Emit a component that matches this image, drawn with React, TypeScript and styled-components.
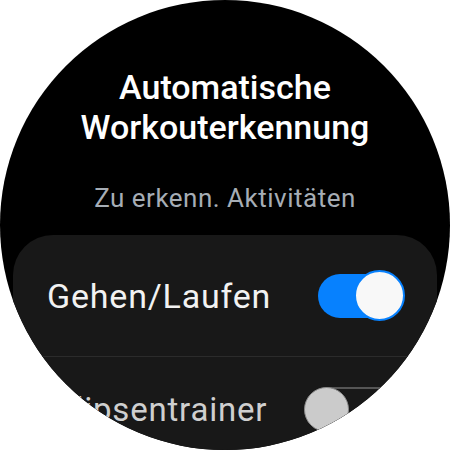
import styled, { createGlobalStyle } from "styled-components";

const GlobalStyle = createGlobalStyle`
  html, body {
    margin: 0;
    padding: 0;
    background: #ffffff;
  }
  body {
    font-family: Roboto, "Noto Sans", "Liberation Sans", sans-serif;
  }
`;

const Watch = styled.div`
  width: 450px;
  height: 450px;
  border-radius: 50%;
  overflow: hidden;
  background: #000;
  display: flex;
  flex-direction: column;
  align-items: stretch;
`;

const Header = styled.header`
  padding-top: 67px;
  text-align: center;
`;

const Title = styled.h1`
  margin: 0;
  font-size: 34px;
  line-height: 40px;
  font-weight: 500;
  color: #ffffff;
`;

const Subtitle = styled.div`
  margin-top: 36px;
  font-size: 26px;
  line-height: 30px;
  letter-spacing: 0.5px;
  color: #a6adb5;
`;

const Card = styled.section`
  margin: 22px 13px 0;
  background: #181818;
  border-radius: 40px 40px 0 0;
  flex: 1;
  display: flex;
  flex-direction: column;
`;

const Row = styled.div<{ $height: number }>`
  height: ${({ $height }) => $height}px;
  display: flex;
  align-items: center;
  justify-content: space-between;
  padding: 0 32px 0 34px;
  flex-shrink: 0;
`;

const Divider = styled.div`
  height: 1px;
  background: #2b2b2b;
  flex-shrink: 0;
`;

const Label = styled.span<{ $dim?: boolean }>`
  font-size: ${({ $dim }) => ($dim ? 33 : 34)}px;
  letter-spacing: 0.8px;
  color: ${({ $dim }) => ($dim ? "#cfcfcf" : "#f2f2f2")};
`;

const SwitchBox = styled.div<{ $on: boolean }>`
  position: relative;
  width: ${({ $on }) => ($on ? 87 : 101)}px;
  height: ${({ $on }) => ($on ? 51 : 45)}px;
  flex-shrink: 0;
`;

const Track = styled.div<{ $on: boolean }>`
  position: absolute;
  top: 50%;
  transform: translateY(-50%);
  left: ${({ $on }) => ($on ? 0 : 2)}px;
  right: ${({ $on }) => ($on ? 6 : 0)}px;
  height: 44px;
  box-sizing: border-box;
  border-radius: 22px;
  background: ${({ $on }) => ($on ? "#0781fe" : "transparent")};
  border: ${({ $on }) => ($on ? "none" : "2px solid #555")};
`;

const Thumb = styled.div<{ $on: boolean }>`
  position: absolute;
  top: 0;
  ${({ $on }) => ($on ? "right: 0;" : "left: 0;")}
  width: ${({ $on }) => ($on ? 51 : 45)}px;
  height: ${({ $on }) => ($on ? 51 : 45)}px;
  box-sizing: border-box;
  border-radius: 50%;
  background: ${({ $on }) => ($on ? "#f8f8f8" : "#cbcbcb")};
  border: ${({ $on }) => ($on ? "2.5px solid #0781fe" : "1.5px solid #8a8a8a")};
`;

function Switch({ on }: { on: boolean }) {
  return (
    <SwitchBox $on={on}>
      <Track $on={on} />
      <Thumb $on={on} />
    </SwitchBox>
  );
}

const activities = [
  { name: "Gehen/Laufen", on: true, height: 121 },
  { name: "Ellipsentrainer", on: false, height: 104 },
];

export default function App() {
  return (
    <>
      <GlobalStyle />
      <Watch>
        <Header>
          <Title>
            Automatische
            <br />
            Workouterkennung
          </Title>
          <Subtitle>Zu erkenn. Aktivitäten</Subtitle>
        </Header>
        <Card>
          {activities.map((a, i) => (
            <div key={a.name}>
              {i > 0 && <Divider />}
              <Row $height={a.height}>
                <Label $dim={!a.on}>{a.name}</Label>
                <Switch on={a.on} />
              </Row>
            </div>
          ))}
        </Card>
      </Watch>
    </>
  );
}
